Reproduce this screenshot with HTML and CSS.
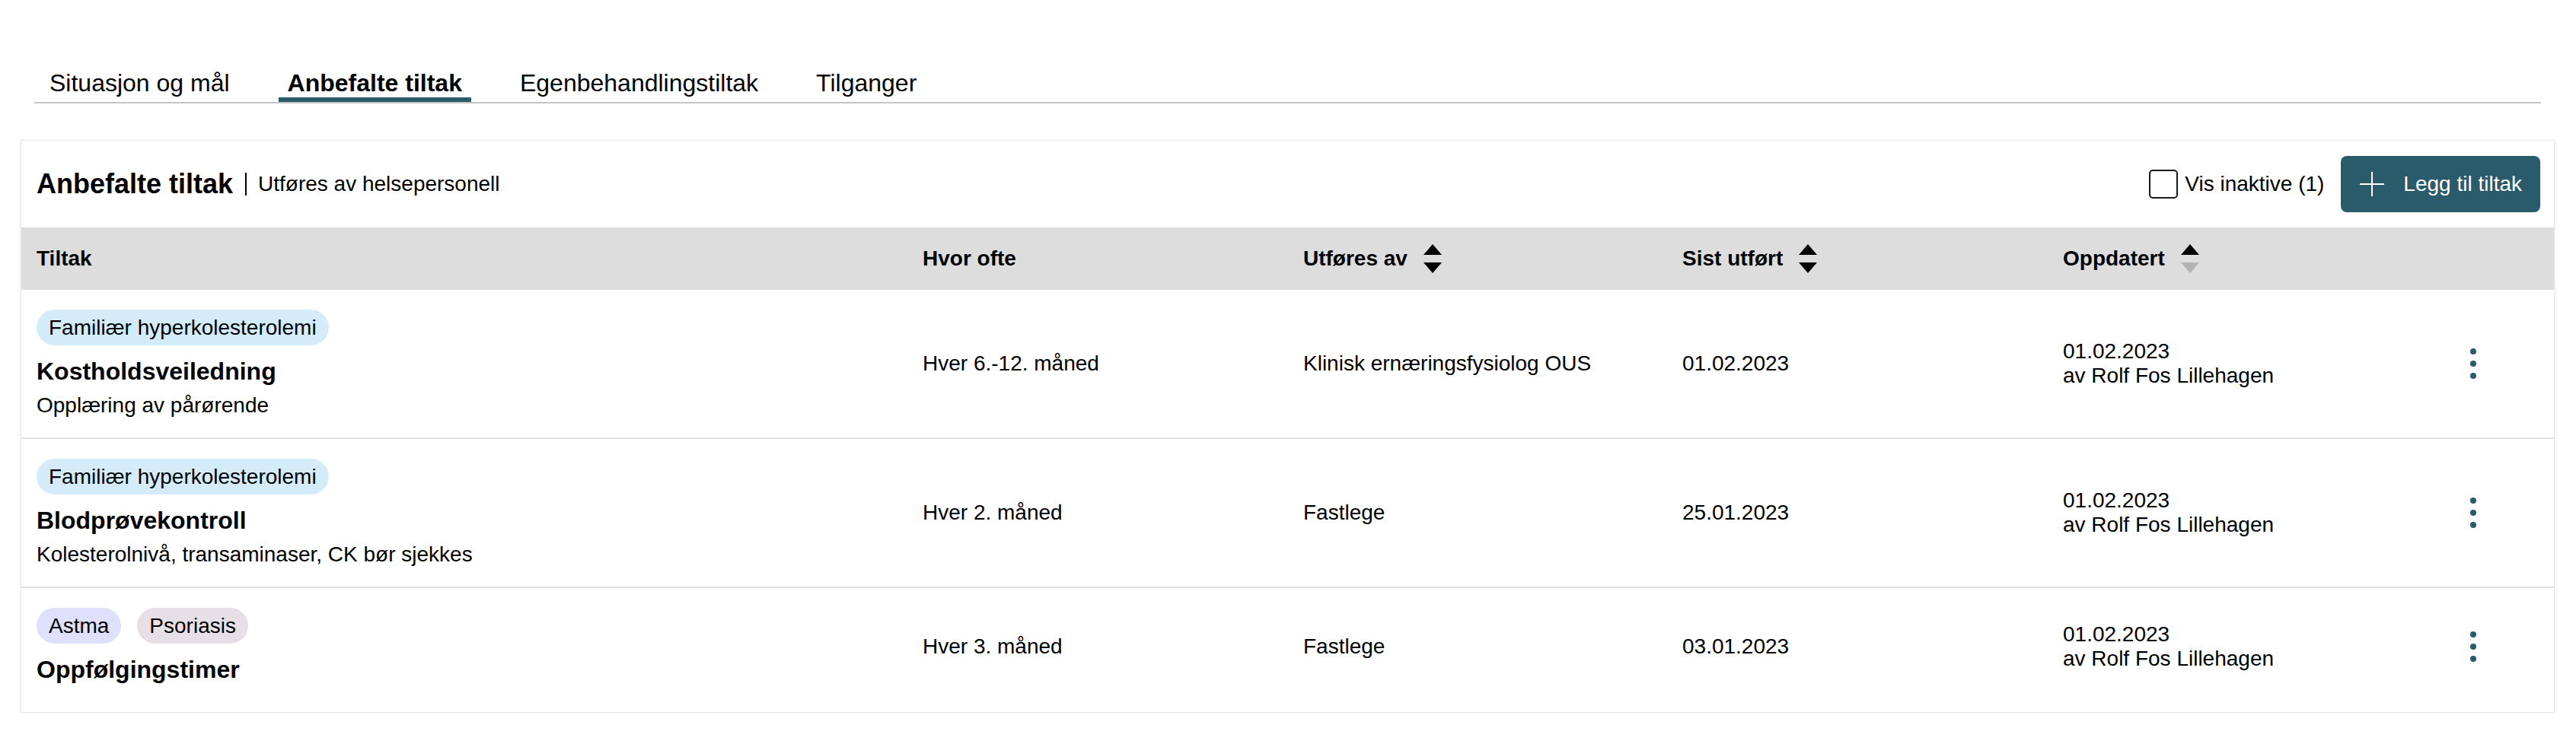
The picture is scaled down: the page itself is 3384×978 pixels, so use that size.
FILE: index.html
```html
<!DOCTYPE html>
<html lang="no">
<head>
<meta charset="utf-8">
<title>Anbefalte tiltak</title>
<link rel="stylesheet" href="styles.css">
</head>
<body>
<nav class="tabs">
  <a class="tab">Situasjon og mål</a>
  <a class="tab tab--active">Anbefalte tiltak</a>
  <a class="tab">Egenbehandlingstiltak</a>
  <a class="tab">Tilganger</a>
</nav>

<section class="card">
  <header class="card-header">
    <div class="card-title">
      <h2 class="title">Anbefalte tiltak</h2>
      <span class="divider"></span>
      <span class="subtitle">Utføres av helsepersonell</span>
    </div>
    <div class="actions">
      <label class="checkbox"><span class="box"></span>Vis inaktive (1)</label>
      <button class="btn-primary" type="button">
        <svg class="plus" width="32" height="32" viewBox="0 0 32 32"><path d="M16 0V32M0 16H32" stroke="#fff" stroke-width="2" fill="none"/></svg>
        <span>Legg til tiltak</span>
      </button>
    </div>
  </header>

  <table class="table">
    <colgroup>
      <col class="col-tiltak">
      <col class="col-ofte">
      <col class="col-utfores">
      <col class="col-sist">
      <col class="col-oppdatert">
      <col class="col-meny">
    </colgroup>
    <thead>
      <tr>
        <th>Tiltak</th>
        <th>Hvor ofte</th>
        <th><span class="sort">Utføres av<svg class="sort-icon" width="24" height="38" viewBox="0 0 24 38"><path d="M12 0L24 14H0Z" fill="#000"/><path d="M0 24H24L12 38Z" fill="#000"/></svg></span></th>
        <th><span class="sort">Sist utført<svg class="sort-icon" width="24" height="38" viewBox="0 0 24 38"><path d="M12 0L24 14H0Z" fill="#000"/><path d="M0 24H24L12 38Z" fill="#000"/></svg></span></th>
        <th><span class="sort">Oppdatert<svg class="sort-icon" width="24" height="38" viewBox="0 0 24 38"><path d="M12 0L24 14H0Z" fill="#000"/><path d="M0 24H24L12 38Z" fill="#b3b3b3"/></svg></span></th>
        <th></th>
      </tr>
    </thead>
    <tbody>
      <tr>
        <td>
          <div class="tags"><span class="tag tag--blue">Familiær hyperkolesterolemi</span></div>
          <div class="item-title">Kostholdsveiledning</div>
          <div class="item-desc">Opplæring av pårørende</div>
        </td>
        <td>Hver 6.-12. måned</td>
        <td>Klinisk ernæringsfysiolog OUS</td>
        <td>01.02.2023</td>
        <td>01.02.2023<br>av Rolf Fos Lillehagen</td>
        <td><button class="kebab" type="button" aria-label="Meny"><svg width="8" height="40" viewBox="0 0 8 40"><circle cx="4" cy="4" r="4"/><circle cx="4" cy="20" r="4"/><circle cx="4" cy="36" r="4"/></svg></button></td>
      </tr>
      <tr>
        <td>
          <div class="tags"><span class="tag tag--blue">Familiær hyperkolesterolemi</span></div>
          <div class="item-title">Blodprøvekontroll</div>
          <div class="item-desc">Kolesterolnivå, transaminaser, CK bør sjekkes</div>
        </td>
        <td>Hver 2. måned</td>
        <td>Fastlege</td>
        <td>25.01.2023</td>
        <td>01.02.2023<br>av Rolf Fos Lillehagen</td>
        <td><button class="kebab" type="button" aria-label="Meny"><svg width="8" height="40" viewBox="0 0 8 40"><circle cx="4" cy="4" r="4"/><circle cx="4" cy="20" r="4"/><circle cx="4" cy="36" r="4"/></svg></button></td>
      </tr>
      <tr>
        <td>
          <div class="tags"><span class="tag tag--lavender">Astma</span><span class="tag tag--mauve">Psoriasis</span></div>
          <div class="item-title">Oppfølgingstimer</div>
        </td>
        <td>Hver 3. måned</td>
        <td>Fastlege</td>
        <td>03.01.2023</td>
        <td>01.02.2023<br>av Rolf Fos Lillehagen</td>
        <td><button class="kebab" type="button" aria-label="Meny"><svg width="8" height="40" viewBox="0 0 8 40"><circle cx="4" cy="4" r="4"/><circle cx="4" cy="20" r="4"/><circle cx="4" cy="36" r="4"/></svg></button></td>
      </tr>
    </tbody>
  </table>
</section>
</body>
</html>
```

FILE: styles.css
```css
* { box-sizing: border-box; }

html, body {
  background: #fff;
}

body {
  margin: 0;
  padding: 90px 28px 0 27px;
  font-family: "Liberation Sans", Arial, Helvetica, sans-serif;
  color: #000;
  font-size: 28px;
  line-height: 32px;
}

/* Tabs */
.tabs {
  display: flex;
  gap: 52px;
  margin: 0 18px;
  padding-left: 8px;
  border-bottom: 2px solid #c4c4c4;
}

.tab {
  display: block;
  padding: 0 12px;
  font-size: 32px;
  line-height: 38px;
  border-bottom: 6px solid transparent;
  color: #000;
  text-decoration: none;
}

.tab--active {
  font-weight: 700;
  border-bottom-color: #2a5b6b;
}

/* Card */
.card {
  margin-top: 48px;
  border: 1px solid #e6e6e6;
  box-shadow: 0 1px 6px rgba(0, 0, 0, 0.08);
  background: #fff;
}

.card-header {
  height: 114px;
  padding: 0 18px 0 20px;
  display: flex;
  align-items: center;
  justify-content: space-between;
}

.card-title {
  display: flex;
  align-items: center;
}

.title {
  margin: 0;
  font-size: 36px;
  line-height: 44px;
  font-weight: 700;
}

.divider {
  width: 2px;
  height: 30px;
  background: #000;
  margin: 0 15px 0 16px;
}

.subtitle {
  font-size: 28px;
  line-height: 32px;
}

.actions {
  display: flex;
  align-items: center;
}

.checkbox {
  display: flex;
  align-items: center;
  gap: 9px;
  margin-right: 22px;
}

.box {
  width: 38px;
  height: 38px;
  border: 2px solid #1a1a1a;
  border-radius: 5px;
  background: #fff;
}

.btn-primary {
  height: 74px;
  display: flex;
  align-items: center;
  gap: 25px;
  padding: 0 24px 0 25px;
  border: none;
  border-radius: 8px;
  background: #2a5b6b;
  color: #fff;
  font-family: inherit;
  font-size: 28px;
  line-height: 32px;
}

.plus { display: block; }

/* Table */
.table {
  width: 100%;
  table-layout: fixed;
  border-collapse: collapse;
}

.col-tiltak { width: 1164px; }
.col-ofte { width: 500px; }
.col-utfores { width: 498px; }
.col-sist { width: 500px; }
.col-oppdatert { width: 510px; }
.col-meny { width: 155px; }

.table th {
  height: 82px;
  padding: 0 20px;
  background: #dddddd;
  text-align: left;
  vertical-align: middle;
  font-weight: 700;
  font-size: 28px;
  line-height: 32px;
}

.sort {
  display: inline-flex;
  align-items: center;
  gap: 21px;
}

.sort-icon { display: block; }

.table td {
  padding: 26px 20px;
  vertical-align: middle;
  border-bottom: 2px solid #e2e2e2;
}

.table tbody tr:last-child td {
  border-bottom: none;
  padding-bottom: 36px;
}

.tags {
  display: flex;
  gap: 21px;
}

.tag {
  display: inline-flex;
  align-items: center;
  height: 47px;
  padding: 0 16px;
  border-radius: 24px;
}

.tag--blue { background: #d4ecf9; }
.tag--lavender { background: #dfe0fb; }
.tag--mauve { background: #e6e0e6; }

.item-title {
  margin-top: 14px;
  font-size: 32px;
  line-height: 40px;
  font-weight: 700;
}

.item-desc {
  margin-top: 9px;
}

.kebab {
  display: flex;
  justify-content: center;
  align-items: center;
  width: 58px;
  height: 58px;
  padding: 0;
  border: none;
  background: transparent;
  fill: #2a5b6b;
}
```
